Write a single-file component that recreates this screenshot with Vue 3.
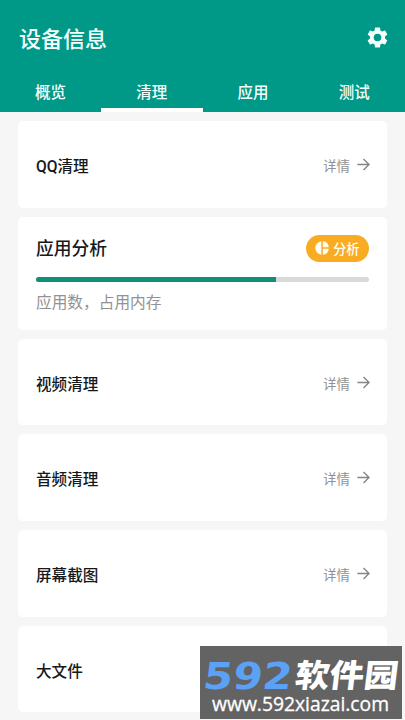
<script setup>
const tabs = ['概览', '清理', '应用', '测试']
const active = '清理'
const usage = 72
const cards = [
  { title: 'QQ清理' },
  { title: '应用分析', analysis: true },
  { title: '视频清理' },
  { title: '音频清理' },
  { title: '屏幕截图' },
  { title: '大文件' },
]
</script>

<template>
  <div class="screen">
    <header class="header">
      <div class="topbar">
        <h1 class="title">设备信息</h1>
        <svg class="gear" viewBox="2 2 20 20">
          <path fill="#f4fffd" d="M19.14 12.94c.04-.3.06-.61.06-.94 0-.32-.02-.64-.07-.94l2.03-1.58c.18-.14.23-.41.12-.61l-1.92-3.32c-.12-.22-.37-.29-.59-.22l-2.39.96c-.5-.38-1.03-.7-1.62-.94l-.36-2.54c-.04-.24-.24-.41-.48-.41h-3.84c-.24 0-.43.17-.47.41l-.36 2.54c-.59.24-1.13.57-1.62.94l-2.39-.96c-.22-.08-.47 0-.59.22L2.74 8.87c-.12.21-.08.47.12.61l2.03 1.58c-.05.3-.09.63-.09.94s.02.64.07.94l-2.03 1.58c-.18.14-.23.41-.12.61l1.92 3.32c.12.22.37.29.59.22l2.39-.96c.5.38 1.03.7 1.62.94l.36 2.54c.05.24.24.41.48.41h3.84c.24 0 .44-.17.47-.41l.36-2.54c.59-.24 1.13-.56 1.62-.94l2.39.96c.22.08.47 0 .59-.22l1.92-3.32c.12-.22.07-.47-.12-.61l-2.01-1.58zM12 15.6A3.6 3.6 0 1 1 12 8.4a3.6 3.6 0 0 1 0 7.2z" />
        </svg>
      </div>
      <nav class="tabs">
        <div v-for="tab in tabs" :key="tab" class="tab" :class="{ active: tab === active }">{{ tab }}</div>
      </nav>
    </header>

    <main class="list">
      <section v-for="card in cards" :key="card.title" class="card" :class="{ analysis: card.analysis }">
        <template v-if="card.analysis">
          <div class="row">
            <h2 class="heading">{{ card.title }}</h2>
            <div class="pill">
              <svg class="pie" viewBox="0 0 14 14" fill="#fffdf0">
                <path d="M6.3 0.2v13.6A6.85 6.85 0 0 1 6.3 0.2z" />
                <path d="M7.8 0.2A6.85 6.85 0 0 1 13.8 6.2H7.8z" />
                <path d="M7.8 7.7h6a6.85 6.85 0 0 1-6 6.1z" />
              </svg>
              <span>分析</span>
            </div>
          </div>
          <div class="track"><div class="fill" :style="{ width: usage + '%' }"></div></div>
          <p class="note">应用数，占用内存</p>
        </template>
        <template v-else>
          <h2 class="name">{{ card.title }}</h2>
          <div class="detail">
            <span>详情</span>
            <svg class="arrow" viewBox="0 0 13 13" fill="none" stroke="#858585" stroke-width="1.4">
              <path d="M0.4 6.5H12M6.5 0.9L12.1 6.5L6.5 12.1" />
            </svg>
          </div>
        </template>
      </section>
    </main>

    <div class="watermark">
      <svg class="brand" viewBox="0 0 202 73">
        <text class="digits" transform="translate(2 43) skewX(-7)" textLength="89" lengthAdjust="spacingAndGlyphs">592</text>
        <text class="brand-name" transform="translate(94 41) skewX(-7)" textLength="103" lengthAdjust="spacingAndGlyphs">软件园</text>
        <text class="url" x="12" y="64.5" textLength="177" lengthAdjust="spacingAndGlyphs">www.592xiazai.com</text>
      </svg>
    </div>
  </div>
</template>

<style>
body {
  margin: 0;
  overflow: hidden;
}
</style>

<style scoped>
.screen {
  position: relative;
  box-sizing: border-box;
  height: 720px;
  overflow: hidden;
  background: #f6f6f6;
  font-family: Roboto, "Noto Sans CJK SC", sans-serif;
  color: #15191c;
}
h1, h2, p {
  margin: 0;
}
.header {
  display: flex;
  flex-direction: column;
  height: 112px;
  background: #009887;
  color: #f4fffd;
}
.topbar {
  display: flex;
  align-items: center;
  justify-content: space-between;
  height: 75px;
  padding: 0 17px 0 19px;
}
.title {
  padding-top: 4px;
  font-size: 22px;
  line-height: 30px;
  font-weight: 500;
}
.gear {
  width: 21px;
  height: 21px;
}
.tabs {
  display: grid;
  grid-template-columns: repeat(4, 1fr);
  height: 37px;
}
.tab {
  box-sizing: border-box;
  padding-top: 7px;
  text-align: center;
  font-size: 15.5px;
  line-height: 23px;
  font-weight: 500;
  border-bottom: 4.5px solid transparent;
}
.tab.active {
  border-bottom-color: #fff;
}
.list {
  display: flex;
  flex-direction: column;
  gap: 9px;
  padding: 9px 18px 0;
}
.card {
  box-sizing: border-box;
  display: flex;
  align-items: center;
  justify-content: space-between;
  height: 86.7px;
  flex-shrink: 0;
  padding: 0 17px 0 18px;
  border-radius: 5px;
  background: #fff;
}
.card.analysis {
  display: block;
  height: 113px;
  padding: 18px 18px 0;
}
.name {
  padding-top: 5px;
  font-size: 15.6px;
  line-height: 24px;
  font-weight: 500;
}
.detail {
  display: flex;
  align-items: center;
  gap: 7px;
  font-size: 13.5px;
  line-height: 20px;
  color: #929292;
}
.detail span {
  padding-top: 3px;
}
.arrow {
  width: 13px;
  height: 13px;
}
.row {
  display: flex;
  align-items: center;
  justify-content: space-between;
  height: 27px;
}
.heading {
  padding-top: 2px;
  font-size: 17.8px;
  line-height: 26px;
  font-weight: 500;
}
.pill {
  box-sizing: border-box;
  display: flex;
  align-items: center;
  gap: 4px;
  width: 63px;
  height: 27px;
  padding-left: 9px;
  border-radius: 14px;
  background: #f9ab22;
  color: #fffdf0;
  font-size: 13.3px;
  line-height: 20px;
  font-weight: 500;
}
.pill span {
  padding-top: 3px;
}
.pie {
  width: 14px;
  height: 14px;
}
.track {
  height: 5px;
  margin-top: 15px;
  border-radius: 2.5px;
  background: #d9d9d9;
  overflow: hidden;
}
.fill {
  height: 100%;
  background: #119078;
}
.note {
  margin-top: 9px;
  font-size: 15.7px;
  line-height: 24px;
  color: #929292;
}
.watermark {
  position: absolute;
  left: 200px;
  top: 646px;
  width: 202px;
  height: 73px;
  background: rgba(84, 84, 84, 0.91);
}
.brand {
  display: block;
  width: 202px;
  height: 73px;
}
.digits {
  font-family: "DejaVu Sans", sans-serif;
  font-weight: 700;
  font-size: 37px;
  fill: #5ba2f6;
}
.brand-name {
  font-family: "Noto Sans CJK SC", sans-serif;
  font-weight: 900;
  font-size: 32px;
  fill: #fff;
}
.url {
  font-family: "Open Sans", "Noto Sans", sans-serif;
  font-size: 19.5px;
  fill: #fff;
  stroke: #fff;
  stroke-width: 0.3px;
}
</style>
